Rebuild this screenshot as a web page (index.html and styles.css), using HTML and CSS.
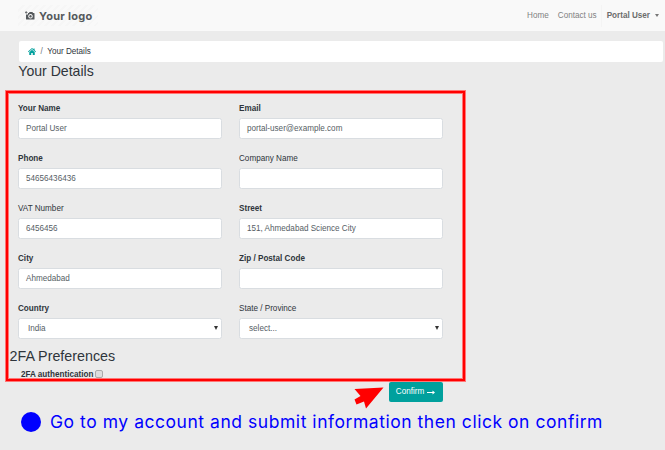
FILE: index.html
```html
<!DOCTYPE html>
<html lang="en">
<head>
<meta charset="utf-8">
<title>Your Details</title>
<link rel="stylesheet" href="styles.css">
</head>
<body>
<header class="navbar">
  <a class="logo">
    <svg class="camera" viewBox="0 0 20 18"><path fill="#55595c" fill-rule="evenodd" d="M3 0v2h2v1.500H3v2H1.500v-2H0V2h1.500V0zM6 4h2l1-2h6l1 2h2a1 1 0 0 1 1 1v11a1 1 0 0 1-1 1H3a1 1 0 0 1-1-1V7h4zM11 6a4.500 4.500 0 1 0 .01 0zM11 8a2.500 2.500 0 1 1-.01 0z"/></svg>
    <span>Your logo</span>
  </a>
  <nav class="menu">
    <a>Home</a><a>Contact us</a><a class="user">Portal User<i class="caret"></i></a>
  </nav>
</header>
<main>
  <div class="breadcrumb">
    <svg class="home" viewBox="0 0 16 14"><path fill="#00a09d" d="M8 0l3 2.700V1h2.200v3.700L16 7.200l-1 1.100L8 2.200 1 8.300 0 7.200zM8 3.500l5.500 4.800V14h-4v-4h-3v4h-4V8.300z"/></svg>
    <span class="slash">/</span><span>Your Details</span>
  </div>
  <h1>Your Details</h1>
  <section class="highlight">
    <div class="fields">
      <div class="field"><label class="required">Your Name</label><div class="input">Portal User</div></div>
      <div class="field"><label class="required">Email</label><div class="input">portal-user@example.com</div></div>
      <div class="field"><label class="required">Phone</label><div class="input">54656436436</div></div>
      <div class="field"><label>Company Name</label><div class="input"></div></div>
      <div class="field"><label>VAT Number</label><div class="input">6456456</div></div>
      <div class="field"><label class="required">Street</label><div class="input">151, Ahmedabad Science City</div></div>
      <div class="field"><label class="required">City</label><div class="input">Ahmedabad</div></div>
      <div class="field"><label class="required">Zip / Postal Code</label><div class="input"></div></div>
      <div class="field"><label class="required">Country</label><div class="input select">India</div></div>
      <div class="field"><label>State / Province</label><div class="input select">select...</div></div>
    </div>
    <h2>2FA Preferences</h2>
    <div class="twofa"><span>2FA authentication</span><i class="check"></i></div>
  </section>
  <div class="actions">
    <svg class="pointer" viewBox="0 0 30 24"><path fill="#f00" d="M29.500 1.500L12 22.500 10 15.500 2.500 18.500 .5 13.500 6.500 10 .5 3z"/></svg>
    <button class="confirm">Confirm<svg class="arrow" viewBox="0 0 16 8"><path fill="#fff" d="M0 2.800h11V0L16 4l-5 4V5.200H0z"/></svg></button>
  </div>
  <div class="caption"><i class="dot"></i><span>Go to my account and submit information then click on confirm</span></div>
</main>
</body>
</html>
```
FILE: styles.css
```css
* { box-sizing: border-box; }
body {
  margin: 0;
  width: 665px;
  height: 450px;
  overflow: hidden;
  background: #ebebeb;
  color: #2f353b;
  font: 8.15px/12px "Liberation Sans", Arial, sans-serif;
}
.navbar {
  display: flex;
  justify-content: space-between;
  height: 31px;
  padding: 0 6px 0 18px;
  background: #f9f9f9;
}
.logo {
  display: flex;
  align-items: center;
  width: 80px;
  height: 21px;
  margin-top: 5px;
  padding-left: 7px;
  background: repeating-linear-gradient(135deg, #f9f9f9 0 3px, #f6f6f6 3px 5px);
  color: #55595c;
  font: bold 11px/20px Inter, sans-serif;
  letter-spacing: .3px;
  white-space: nowrap;
}
.camera { width: 10px; height: 9px; margin-right: 4px; }
.menu {
  display: flex;
  height: 22px;
  margin-top: 4px;
  color: #818181;
  line-height: 22px;
}
.menu a { position: relative; top: .6px; margin-left: 9px; }
.menu .user {
  display: flex;
  align-items: center;
  margin-left: 4px;
  padding-left: 5px;
  border-left: 1px solid #f4f4f4;
  color: #6c6c6c;
  font-weight: bold;
}
.caret {
  margin-left: 5px;
  border: 2.500px solid transparent;
  border-top: 3px solid #777;
  border-bottom: 0;
}
.breadcrumb {
  display: flex;
  align-items: center;
  height: 21px;
  margin: 10px 2px 0 19px;
  padding-left: 9px;
  border-radius: 2px;
  background: #fff;
}
.home { width: 8px; height: 7px; }
.slash { margin: 0 4.500px; color: #6c757d; }
h1, h2 { margin: 0; font-size: 14.100px; line-height: 18px; font-weight: normal; }
h1 { margin-left: 18.300px; }
.highlight {
  width: 461px;
  height: 292px;
  margin: 10px 0 0 5px;
  padding-top: 12px;
  border: 1px solid #f77;
  box-shadow: inset 0 0 0 2px #f00, inset 0 0 0 3px #f77;
}
.fields {
  display: grid;
  grid-template-columns: 204px 204px;
  grid-auto-rows: 50px;
  column-gap: 17px;
  margin-left: 12px;
}
.field label { display: block; height: 15px; line-height: 12px; }
.required { font-weight: bold; }
.input {
  position: relative;
  height: 21px;
  padding-left: 7px;
  border: 1px solid #d9dde1;
  border-radius: 2.500px;
  background: #fff;
  color: #565e65;
  line-height: 19px;
}
.select { padding-left: 9px; }
.select::after {
  content: "";
  position: absolute;
  right: 3px;
  top: 7px;
  border: 2px solid transparent;
  border-top: 4px solid #333;
  border-bottom: 0;
}
h2 { margin: -6px 0 0 3.500px; font-size: 14.300px; }
.twofa {
  display: flex;
  align-items: center;
  height: 18px;
  padding-left: 15px;
  font-weight: bold;
}
.twofa span { padding-top: 2px; }
.check {
  width: 8px;
  height: 8px;
  margin-left: 2px;
  border: 1px solid #aaa;
  border-radius: 2px;
  background: #ddd;
}
.actions {
  display: flex;
  justify-content: flex-end;
  width: 442.500px;
  height: 20px;
}
.pointer { width: 30px; height: 24px; margin: 4px 5px 0 0; }
.confirm {
  display: flex;
  align-items: center;
  justify-content: center;
  width: 54px;
  height: 20px;
  padding: 0;
  border: 0;
  border-radius: 2px;
  background: #00a09d;
  color: #fff;
  font: 8.150px/18px "Liberation Sans", Arial, sans-serif;
}
.arrow { width: 8px; height: 5px; margin-left: 3px; }
.caption {
  display: flex;
  align-items: center;
  height: 24px;
  margin: 8px 0 0 21px;
  color: #00f;
  font: 400 17.500px/24px Inter, sans-serif;
  letter-spacing: .54px;
  white-space: nowrap;
}
.dot { width: 20px; height: 20px; margin-right: 9px; border-radius: 50%; background: #00f; }
```
